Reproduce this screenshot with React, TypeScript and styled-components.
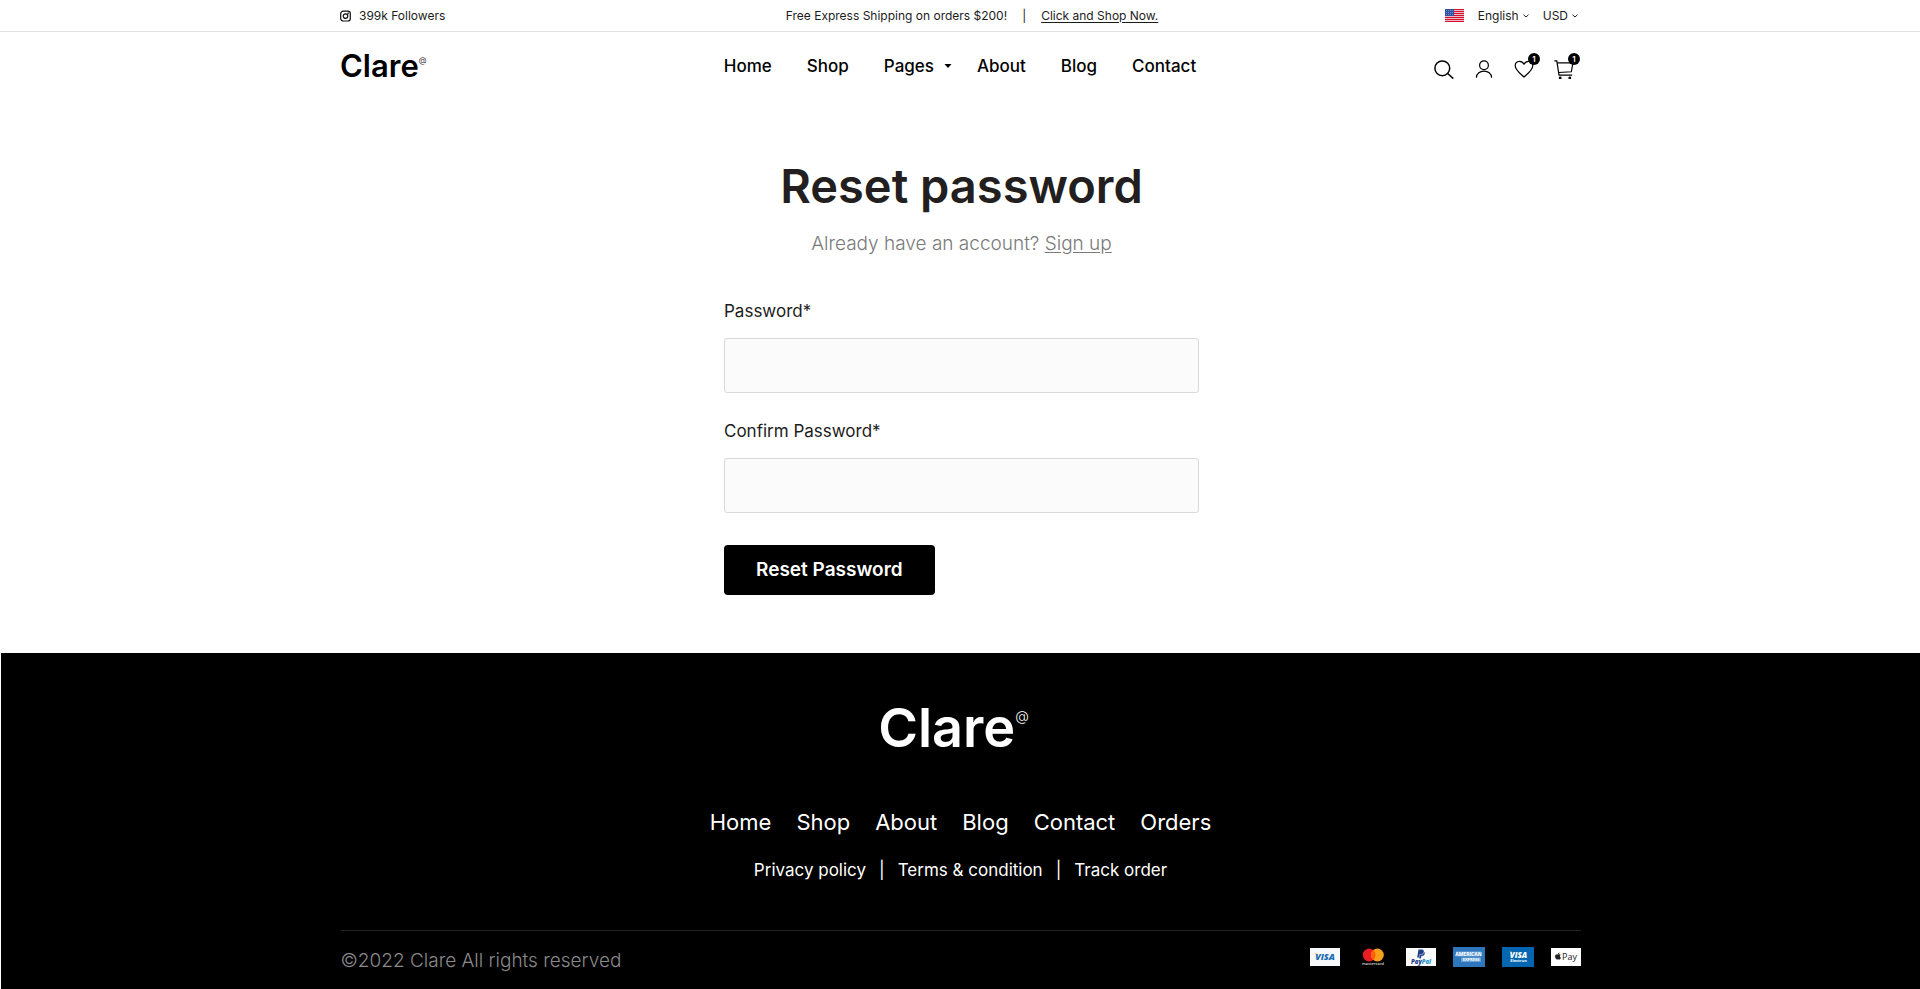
import React from 'react';
import styled, { createGlobalStyle } from 'styled-components';
import { FaApple, FaPaypal } from 'react-icons/fa';

const GlobalStyle = createGlobalStyle`
  *, *::before, *::after { box-sizing: border-box; }
  body {
    margin: 0;
    background: #fff;
    color: #000;
    font-family: Inter, "Liberation Sans", sans-serif;
    font-size: 17px;
    line-height: 24px;
  }
  a { color: inherit; text-decoration: none; }
  button, input, select { font: inherit; color: inherit; }
`;

const Container = styled.div`
  width: 100%;
  max-width: 1240px;
  margin: 0 auto;
`;

const TopBar = styled.div`
  border-bottom: 1px solid #e2e2e2;
  font-size: 12px;
  line-height: 16px;
  color: #1c1c1c;
`;

const TopBarRow = styled(Container)`
  display: grid;
  grid-template-columns: 1fr auto 1fr;
  align-items: center;
  height: 31px;
`;

const Followers = styled.a`
  display: flex;
  align-items: center;
  gap: 8px;
`;

const Promo = styled.p`
  display: flex;
  gap: 15px;
  margin: 0;
  padding-left: 24px;
`;

const UnderlinedLink = styled.a`
  text-decoration: underline;
  text-underline-offset: 2px;
`;

const Locale = styled.div`
  display: flex;
  justify-content: flex-end;
  align-items: center;
  gap: 14px;
  padding-right: 2px;
`;

const Picker = styled.label`
  display: flex;
  align-items: center;
  gap: 4px;
`;

const PickerSelect = styled.select`
  appearance: none;
  field-sizing: content;
  margin: 0;
  padding: 0;
  border: 0;
  background: none;
  cursor: pointer;
`;

const HeaderRow = styled(Container)`
  display: grid;
  grid-template-columns: 1fr auto 1fr;
  align-items: center;
  height: 68px;
`;

const Logo = styled.a<{ $large?: boolean }>`
  display: inline-flex;
  align-items: flex-start;
  padding-right: ${(p) => (p.$large ? 14 : 0)}px;
  font-size: ${(p) => (p.$large ? 54 : 31)}px;
  line-height: ${(p) => (p.$large ? 64 : 36)}px;
  font-weight: 600;
`;

const LogoMark = styled.span<{ $large?: boolean }>`
  padding-top: ${(p) => (p.$large ? 12 : 8)}px;
  font-size: ${(p) => (p.$large ? 14 : 8)}px;
  line-height: ${(p) => (p.$large ? 16 : 8)}px;
  font-weight: 300;
`;

const Nav = styled.nav`
  display: flex;
  align-items: center;
  gap: 35px;
  font-weight: 500;
`;

const NavMenu = styled.button`
  display: flex;
  align-items: center;
  gap: 10px;
  margin: 0 -10px 0 0;
  padding: 0;
  border: 0;
  background: none;
  cursor: pointer;
`;

const Tools = styled.div`
  display: flex;
  justify-content: flex-end;
  gap: 20px;
  padding: 6px 6px 0 0;
`;

const ToolButton = styled.button`
  position: relative;
  display: flex;
  width: 20px;
  height: 20px;
  padding: 0;
  border: 0;
  background: none;
  cursor: pointer;
`;

const Badge = styled.span`
  position: absolute;
  top: -6px;
  right: -6px;
  width: 12px;
  height: 12px;
  border-radius: 50%;
  background: #000;
  color: #fff;
  font-size: 8px;
  line-height: 12px;
  font-weight: 600;
  text-align: center;
`;

const Main = styled.main`
  width: 100%;
  max-width: 478px;
  margin: 0 auto;
  padding: 58px 0 58px 3px;
`;

const Title = styled.h1`
  margin: 0 0 16px;
  color: #231f20;
  font-size: 47px;
  line-height: 56px;
  font-weight: 600;
  text-align: center;
  white-space: nowrap;
`;

const Subtitle = styled.p`
  margin: 0 0 41px;
  color: #7a7a7a;
  font-size: 19px;
  line-height: 28px;
  font-weight: 300;
  text-align: center;
`;

const Form = styled.form`
  display: flex;
  flex-direction: column;
  align-items: flex-start;
`;

const Field = styled.div`
  display: flex;
  flex-direction: column;
  gap: 15px;
  width: 100%;
  margin-bottom: 26px;
  color: #1c1c1c;
`;

const TextInput = styled.input`
  width: 100%;
  height: 55px;
  padding: 0 16px;
  border: 1px solid #d9d9d9;
  border-radius: 3px;
  background: #fbfbfb;
`;

const SubmitButton = styled.button`
  height: 50px;
  margin-top: 6px;
  padding: 0 32px;
  border: 0;
  border-radius: 4px;
  background: #000;
  color: #fff;
  font-size: 19px;
  line-height: 28px;
  font-weight: 600;
  cursor: pointer;
`;

const Footer = styled.footer`
  border-left: 1px solid #fff;
  background: #000;
  color: #fff;
  padding: 43px 0 14px;
`;

const FooterBody = styled(Container)`
  display: flex;
  flex-direction: column;
  align-items: center;
`;

const FooterNav = styled.nav`
  display: flex;
  gap: 25px;
  margin: 48px 0 22px;
  font-size: 22px;
  line-height: 28px;
`;

const LegalNav = styled.nav`
  display: flex;
  gap: 13px;
`;

const FooterBottom = styled.div`
  display: flex;
  justify-content: space-between;
  align-items: flex-start;
  width: 100%;
  margin-top: 48px;
  padding-top: 16px;
  border-top: 1px solid #242424;
`;

const Copyright = styled.p`
  margin: 0;
  color: #8a8a8a;
  font-size: 19px;
  line-height: 28px;
  font-weight: 300;
`;

const Cards = styled.ul`
  display: flex;
  gap: 17px;
  margin: 0;
  padding: 0;
  list-style: none;
`;

const Card = styled.li`
  display: flex;
`;

const InstagramIcon = () => (
  <svg width="11" height="12" viewBox="0 0 11 12" fill="none" stroke="#111" strokeWidth="1.2">
    <rect x="0.7" y="1.2" width="9.6" height="9.8" rx="2.6" />
    <circle cx="5.5" cy="6.1" r="2.3" />
    <circle cx="8.2" cy="3.4" r="0.3" />
  </svg>
);

const FlagIcon = () => (
  <svg width="19" height="13" viewBox="0 0 19 13">
    <rect width="19" height="13" fill="#f4e4e8" />
    {[0, 2, 4, 6, 8, 10, 12].map((y) => (
      <rect key={y} y={y} width="19" height="1.2" fill="#d4102f" />
    ))}
    <rect width="9" height="7" fill="#2f4fa3" />
    {[1, 3, 5].map((y) =>
      [1, 3, 5, 7].map((x) => <rect key={`${x}-${y}`} x={x} y={y} width="0.8" height="0.8" fill="#9fb0dc" />)
    )}
  </svg>
);

const ChevronIcon = () => (
  <svg width="6" height="4" viewBox="0 0 6 4" fill="none" stroke="#222" strokeWidth="1">
    <path d="M0.5 0.7 L3 3 L5.5 0.7" />
  </svg>
);

const CaretIcon = () => (
  <svg width="8" height="4" viewBox="0 0 8 4">
    <path d="M0.5 0 H7.5 L4 4 Z" />
  </svg>
);

const SearchIcon = () => (
  <svg width="20" height="20" viewBox="0 0 20 20" fill="none" stroke="#000" strokeWidth="1.5">
    <circle cx="8.3" cy="9.3" r="7.4" />
    <path d="M13.7 14.5 L19.3 19.6" />
  </svg>
);

const UserIcon = () => (
  <svg width="20" height="20" viewBox="0 0 20 20" fill="none" stroke="#000" strokeWidth="1.2">
    <circle cx="10" cy="6.3" r="4.4" />
    <path d="M2.4 18.8 C2.4 9.8 17.6 9.8 17.6 18.8" />
  </svg>
);

const HeartIcon = () => (
  <svg width="20" height="20" viewBox="0 0 20 20" fill="none" stroke="#000" strokeWidth="1.2" strokeLinejoin="round">
    <path d="M10 18 C7.8 15.6 1.4 11.6 1.2 6.8 C1.1 1.8 7.6 0.8 10 5.3 C12.4 0.8 18.9 1.8 18.8 6.8 C18.6 11.6 12.2 15.6 10 18 Z" />
  </svg>
);

const CartIcon = () => (
  <svg width="20" height="20" viewBox="0 0 20 20" fill="none" stroke="#000" strokeWidth="1.2">
    <path d="M0.4 1.8 H2.8 L5 16.1 H18.2" />
    <path d="M3.2 3.8 H19 L17.3 12.8 L4.7 13.5" />
    <circle cx="6.2" cy="19" r="0.8" fill="#000" />
    <circle cx="15.8" cy="19" r="0.8" fill="#000" />
  </svg>
);

const cardFont = '"Open Sans", "Liberation Sans", sans-serif';

const VisaCard = () => (
  <svg width="30" height="20" viewBox="0 0 30 20" role="img" aria-label="Visa">
    <rect y="1" width="30" height="18" fill="#f7f8fa" />
    <path d="M4 6.5 H7 L8.2 9.5 C7.4 8 6 7 4 6.5 Z" fill="#f0a32a" />
    <text x="15" y="13" fill="#1a6cb0" fontFamily={cardFont} fontSize="9" fontWeight="800" fontStyle="italic" textAnchor="middle">VISA</text>
  </svg>
);

const MastercardCard = () => (
  <svg width="32" height="20" viewBox="0 0 32 20" role="img" aria-label="Mastercard">
    <circle cx="12.2" cy="8" r="6.4" fill="#ea1d25" />
    <circle cx="20.4" cy="8" r="6.4" fill="#f79f1a" />
    <path d="M16.3 3.1 A6.4 6.4 0 0 1 16.3 12.9 A6.4 6.4 0 0 1 16.3 3.1 Z" fill="#ff5f00" />
    <text x="16" y="18" fill="#ddd" fontFamily={cardFont} fontSize="4" fontWeight="600" textAnchor="middle">mastercard</text>
  </svg>
);

const PaypalCard = () => (
  <svg width="30" height="20" viewBox="0 0 30 20" role="img" aria-label="PayPal">
    <rect y="1" width="30" height="18" fill="#fafafa" />
    <FaPaypal x="10" y="2" size={10} color="#1f3f86" />
    <text x="15" y="17" fill="#1f3f86" fontFamily={cardFont} fontSize="6" fontWeight="800" fontStyle="italic" textAnchor="middle">
      Pay<tspan fill="#2a9ad6">Pal</tspan>
    </text>
  </svg>
);

const AmexCard = () => (
  <svg width="32" height="20" viewBox="0 0 32 20" role="img" aria-label="American Express">
    <rect width="32" height="20" fill="#2f77bc" />
    <rect x="3" y="4.5" width="25" height="5" fill="#6ba3d8" />
    <rect x="8" y="10.5" width="20" height="4.5" fill="#6ba3d8" />
    <text x="15.5" y="8.8" fill="#fff" fontFamily={cardFont} fontSize="5" fontWeight="700" textAnchor="middle">AMERICAN</text>
    <text x="18" y="14.4" fill="#fff" fontFamily={cardFont} fontSize="4" fontWeight="700" textAnchor="middle">EXPRESS</text>
  </svg>
);

const VisaElectronCard = () => (
  <svg width="32" height="20" viewBox="0 0 32 20" role="img" aria-label="Visa Electron">
    <rect width="32" height="20" fill="#0466b0" />
    <path d="M7 4.5 H9.5 L10.6 7 C9.8 5.8 8.6 5 7 4.5 Z" fill="#f0a32a" />
    <text x="16.5" y="10.6" fill="#fff" fontFamily={cardFont} fontSize="8" fontWeight="800" fontStyle="italic" textAnchor="middle">VISA</text>
    <text x="16.5" y="15.2" fill="#fff" fontFamily={cardFont} fontSize="4" fontWeight="700" textAnchor="middle">Electron</text>
  </svg>
);

const ApplePayCard = () => (
  <svg width="30" height="20" viewBox="0 0 30 20" role="img" aria-label="Apple Pay">
    <rect y="1" width="30" height="18" fill="#fff" />
    <FaApple x="3" y="5" size={8} color="#222" />
    <text x="11" y="13" fill="#222" fontFamily={cardFont} fontSize="9">Pay</text>
  </svg>
);

const footerLinks = ['Home', 'Shop', 'About', 'Blog', 'Contact', 'Orders'];
const paymentCards = [VisaCard, MastercardCard, PaypalCard, AmexCard, VisaElectronCard, ApplePayCard];

export default function App() {
  return (
    <>
      <GlobalStyle />
      <header>
        <TopBar>
          <TopBarRow>
            <Followers href="#"><InstagramIcon />399k Followers</Followers>
            <Promo>
              <span>Free Express Shipping on orders $200!</span>
              <span>|</span>
              <UnderlinedLink href="#">Click and Shop Now.</UnderlinedLink>
            </Promo>
            <Locale>
              <FlagIcon />
              <Picker>
                <PickerSelect aria-label="Language"><option>English</option></PickerSelect>
                <ChevronIcon />
              </Picker>
              <Picker>
                <PickerSelect aria-label="Currency"><option>USD</option></PickerSelect>
                <ChevronIcon />
              </Picker>
            </Locale>
          </TopBarRow>
        </TopBar>
        <HeaderRow>
          <div>
            <Logo href="#">Clare<LogoMark>@</LogoMark></Logo>
          </div>
          <Nav>
            <a href="#">Home</a>
            <a href="#">Shop</a>
            <NavMenu type="button" aria-haspopup="true">Pages<CaretIcon /></NavMenu>
            <a href="#">About</a>
            <a href="#">Blog</a>
            <a href="#">Contact</a>
          </Nav>
          <Tools>
            <ToolButton type="button" aria-label="Search"><SearchIcon /></ToolButton>
            <ToolButton type="button" aria-label="Account"><UserIcon /></ToolButton>
            <ToolButton type="button" aria-label="Wishlist"><HeartIcon /><Badge>1</Badge></ToolButton>
            <ToolButton type="button" aria-label="Cart"><CartIcon /><Badge>1</Badge></ToolButton>
          </Tools>
        </HeaderRow>
      </header>

      <Main>
        <Title>Reset password</Title>
        <Subtitle>Already have an account? <UnderlinedLink href="#">Sign up</UnderlinedLink></Subtitle>
        <Form onSubmit={(e) => e.preventDefault()}>
          <Field>
            <label htmlFor="password">Password*</label>
            <TextInput id="password" type="password" />
          </Field>
          <Field>
            <label htmlFor="confirm">Confirm Password*</label>
            <TextInput id="confirm" type="password" />
          </Field>
          <SubmitButton type="submit">Reset Password</SubmitButton>
        </Form>
      </Main>

      <Footer>
        <FooterBody>
          <Logo href="#" $large>Clare<LogoMark $large>@</LogoMark></Logo>
          <FooterNav>
            {footerLinks.map((label) => <a key={label} href="#">{label}</a>)}
          </FooterNav>
          <LegalNav>
            <a href="#">Privacy policy</a>
            <span>|</span>
            <a href="#">Terms &amp; condition</a>
            <span>|</span>
            <a href="#">Track order</a>
          </LegalNav>
          <FooterBottom>
            <Copyright>©2022 Clare All rights reserved</Copyright>
            <Cards>
              {paymentCards.map((Icon, i) => <Card key={i}><Icon /></Card>)}
            </Cards>
          </FooterBottom>
        </FooterBody>
      </Footer>
    </>
  );
}
